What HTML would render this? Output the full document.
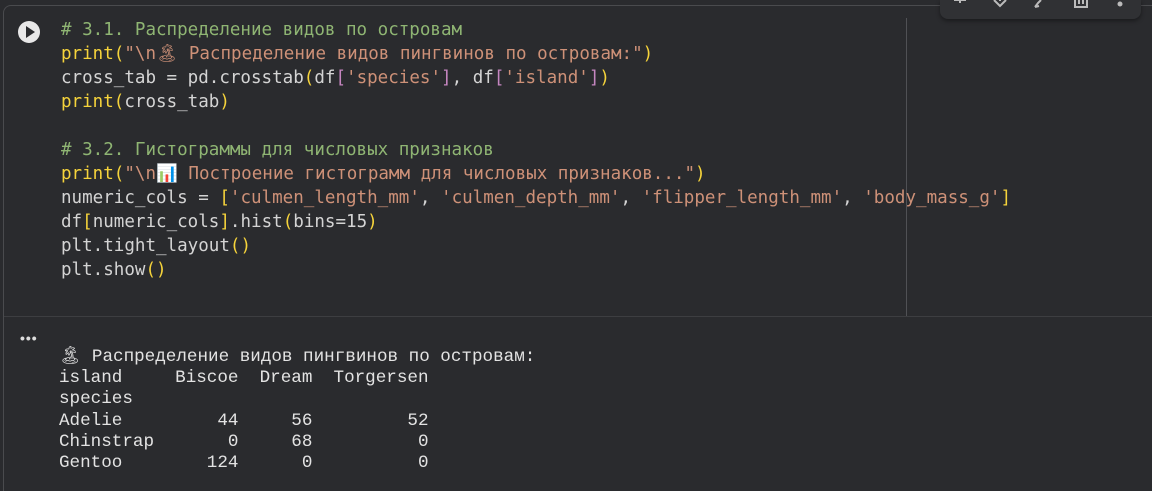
<!DOCTYPE html>
<html style="height:491px;overflow:hidden"><head><meta charset="utf-8"><style>
body{margin:0;width:1152px;height:491px;background:#2a2b2e;overflow:hidden;position:relative;font-family:"DejaVu Sans Mono",monospace}
.cell{position:absolute;left:3px;top:5px;right:0;height:486px;box-sizing:border-box;border:1px solid #4a4b4e;border-right:none;border-bottom:none;border-radius:8px 0 0 0;}
.code{position:absolute;left:61px;top:18px;font-size:17.54px;line-height:24px;color:#d4d4d4;white-space:pre}
.c{color:#8fb573}.s{color:#ce9178}.y{color:#f5d33b}.p{color:#c586c0}
.ruler{position:absolute;left:906px;top:18px;width:1px;height:298px;background:#505155}
.div{position:absolute;left:4px;right:0;top:316px;height:1px;background:#3d3e41}
.out{position:absolute;left:59px;top:347px;font-family:"Liberation Mono","DejaVu Sans Mono",monospace;font-size:17.6px;line-height:21.2px;color:#e3e3e3;white-space:pre}
.run{position:absolute;left:18px;top:21px;width:22px;height:22px;border-radius:50%;background:#e8e8e8}
.run:after{content:"";position:absolute;left:8px;top:5px;border-left:9px solid #2a2b2e;border-top:6px solid transparent;border-bottom:6px solid transparent}
.dots{position:absolute;left:20px;top:330px;color:#ddd;font-size:14px;font-weight:bold;letter-spacing:1px;font-family:"Liberation Sans",sans-serif}
.tb{position:absolute;left:940px;top:0;width:201px;height:19px;overflow:hidden;background:#303134;border-radius:0 0 8px 8px;box-shadow:0 2px 4px rgba(0,0,0,.4)}
</style></head><body>
<div class="cell"></div>
<div class="tb"><svg width="201" height="19" style="position:absolute;left:0;top:0" stroke="#bbb" stroke-width="2" fill="none">
<path d="M20 0v3M14 0h12"/><path d="M54 0l6 6 6-6M60 0v1"/><path d="M95 7l3-4 3-3M95 7l4-1"/><path d="M135 0v7h12V0M139 0v4M143 0v4"/><circle cx="180" cy="4" r="1.5" fill="#bbb"/></svg></div>
<div class="run"></div>
<div class="ruler"></div>
<div class="code"><span class="c"># 3.1. Распределение видов по островам</span>
<span class="y">print(</span><span class="s">"\n🏝 Распределение видов пингвинов по островам:"</span><span class="y">)</span>
cross_tab = pd.crosstab<span class="y">(</span>df<span class="p">[</span><span class="s">'species'</span><span class="p">]</span>, df<span class="p">[</span><span class="s">'island'</span><span class="p">]</span><span class="y">)</span>
<span class="y">print(</span>cross_tab<span class="y">)</span>

<span class="c"># 3.2. Гистограммы для числовых признаков</span>
<span class="y">print(</span><span class="s">"\n📊 Построение гистограмм для числовых признаков..."</span><span class="y">)</span>
numeric_cols = <span class="y">[</span><span class="s">'culmen_length_mm'</span>, <span class="s">'culmen_depth_mm'</span>, <span class="s">'flipper_length_mm'</span>, <span class="s">'body_mass_g'</span><span class="y">]</span>
df<span class="y">[</span>numeric_cols<span class="y">]</span>.hist<span class="y">(</span>bins=15<span class="y">)</span>
plt.tight_layout<span class="y">()</span>
plt.show<span class="y">()</span></div>
<div class="div"></div>
<div class="dots">•••</div>
<div class="out">🏝 Распределение видов пингвинов по островам:
island     Biscoe  Dream  Torgersen
species                            
Adelie         44     56         52
Chinstrap       0     68          0
Gentoo        124      0          0</div>
</body></html>
